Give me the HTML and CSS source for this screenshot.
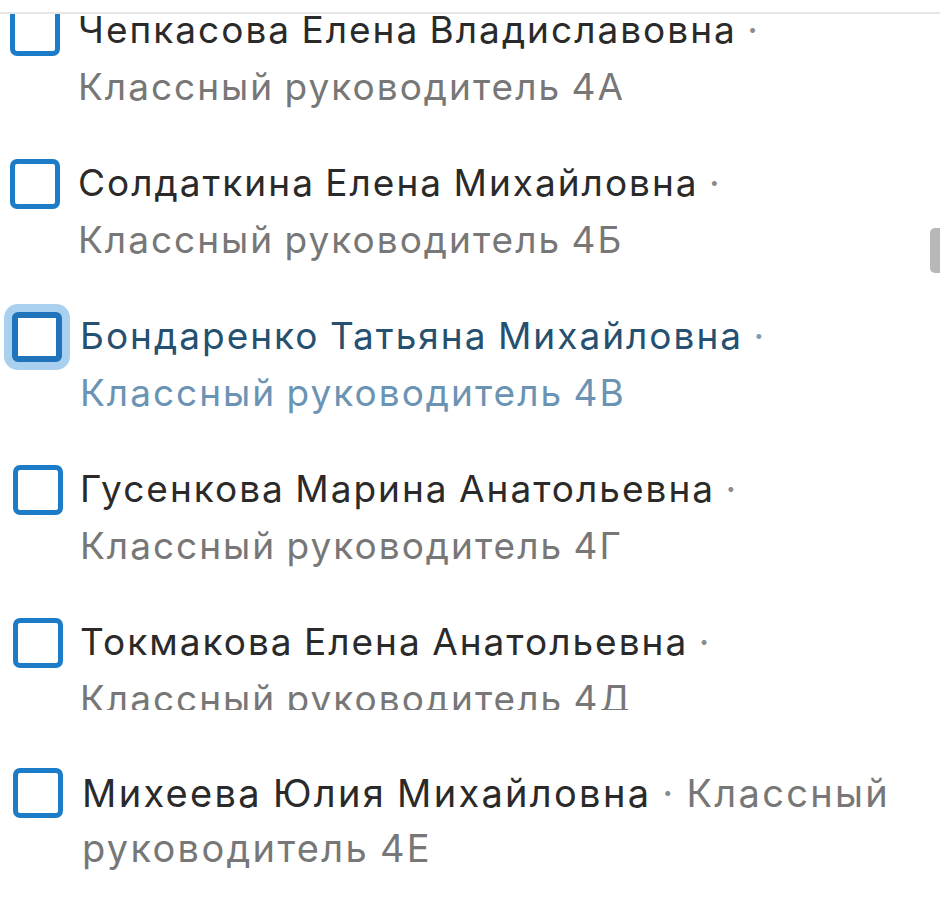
FILE: index.html
```html
<!DOCTYPE html>
<html lang="ru">
<head>
  <meta charset="UTF-8">
  <meta name="viewport" content="width=device-width, initial-scale=1.0">
  <link rel="stylesheet" href="styles.css">
  <title>Классные руководители</title>
</head>
<body>
  <div class="topbar"></div>
  <div class="scroll_thumb"></div>

  <div class="sheet">
    <ul class="list">
      <li class="item">
        <span class="check"></span>
        <p class="text"><span class="name">Чепкасова Елена Владиславовна</span> · <span class="role">Классный руководитель 4А</span></p>
      </li>
      <li class="item">
        <span class="check"></span>
        <p class="text"><span class="name">Солдаткина Елена Михайловна</span> · <span class="role">Классный руководитель 4Б</span></p>
      </li>
      <li class="item active">
        <span class="check"></span>
        <p class="text"><span class="name">Бондаренко Татьяна Михайловна</span> · <span class="role">Классный руководитель 4В</span></p>
      </li>
      <li class="item shifted">
        <span class="check"></span>
        <p class="text"><span class="name">Гусенкова Марина Анатольевна</span> · <span class="role">Классный руководитель 4Г</span></p>
      </li>
      <li class="item shifted">
        <span class="check"></span>
        <p class="text"><span class="name">Токмакова Елена Анатольевна</span> · <span class="role">Классный руководитель 4Д</span></p>
      </li>
    </ul>
  </div>

  <div class="sheet sheet_next">
    <ul class="list">
      <li class="item shifted big">
        <span class="check"></span>
        <p class="text"><span class="name">Михеева Юлия Михайловна</span> · <span class="role">Классный руководитель 4Е</span></p>
      </li>
    </ul>
  </div>
</body>
</html>
```

FILE: styles.css
```css
* {
  box-sizing: border-box;
}

body {
  margin: 0;
  width: 940px;
  height: 900px;
  overflow: hidden;
  position: relative;
  background: #fff;
  font-family: Inter, Roboto, sans-serif;
  color: #2a2a2a;
}

.topbar {
  position: absolute;
  top: 0;
  left: 0;
  right: 0;
  height: 14px;
  background: #fff;
  border-bottom: 2px solid #e6e6e6;
  z-index: 2;
}

.scroll_thumb {
  position: absolute;
  top: 228px;
  right: 0;
  width: 10px;
  height: 45px;
  border-radius: 5px 0 0 5px;
  background: #b8b8b8;
  z-index: 2;
}

.sheet {
  height: 710px;
  overflow: hidden;
}

.sheet_next {
  height: 190px;
  border-top: 2px solid transparent;
  position: relative;
}

.sheet_next::before {
  content: '';
  position: absolute;
  top: -2px;
  left: 640px;
  right: 0;
  height: 2px;
  background: #d2d2d2;
}

.list {
  list-style: none;
  margin: 0;
  padding: 1px 0 0 0;
  display: flex;
  flex-direction: column;
  gap: 39px;
}

.sheet_next .list {
  padding-top: 54px;
}

.item {
  display: flex;
  align-items: flex-start;
  padding-left: 10px;
}

.item.shifted {
  padding-left: 13px;
}

.check {
  flex: none;
  width: 50px;
  height: 50px;
  margin-top: 5px;
  border: 5px solid #1d7cc8;
  border-radius: 7px;
  background: #fff;
}

.text {
  margin: 0 0 0 18px;
  width: 812px;
  font-size: 37px;
  line-height: 57px;
  letter-spacing: 2px;
  word-spacing: -2px;
  color: #8a8a8a;
}

.shifted .text {
  margin-left: 17px;
}

.name {
  color: #2a2a2a;
}

.role {
  color: #777;
}

.big .text {
  width: 840px;
  font-size: 38px;
  line-height: 55px;
  letter-spacing: 2.3px;
  margin-left: 19px;
}

.big .check {
  margin-top: 2px;
}

.active .check {
  border-width: 6px;
  border-color: #1f74bb;
  box-shadow: 0 0 0 8px #a9d1ef;
  border-radius: 6px;
  margin-top: 5px;
  margin-left: 2px;
}

.active .text {
  margin-left: 18px;
  color: #7e9bb4;
}

.active .name {
  color: #25506f;
}

.active .role {
  color: #6b93b3;
}
```
